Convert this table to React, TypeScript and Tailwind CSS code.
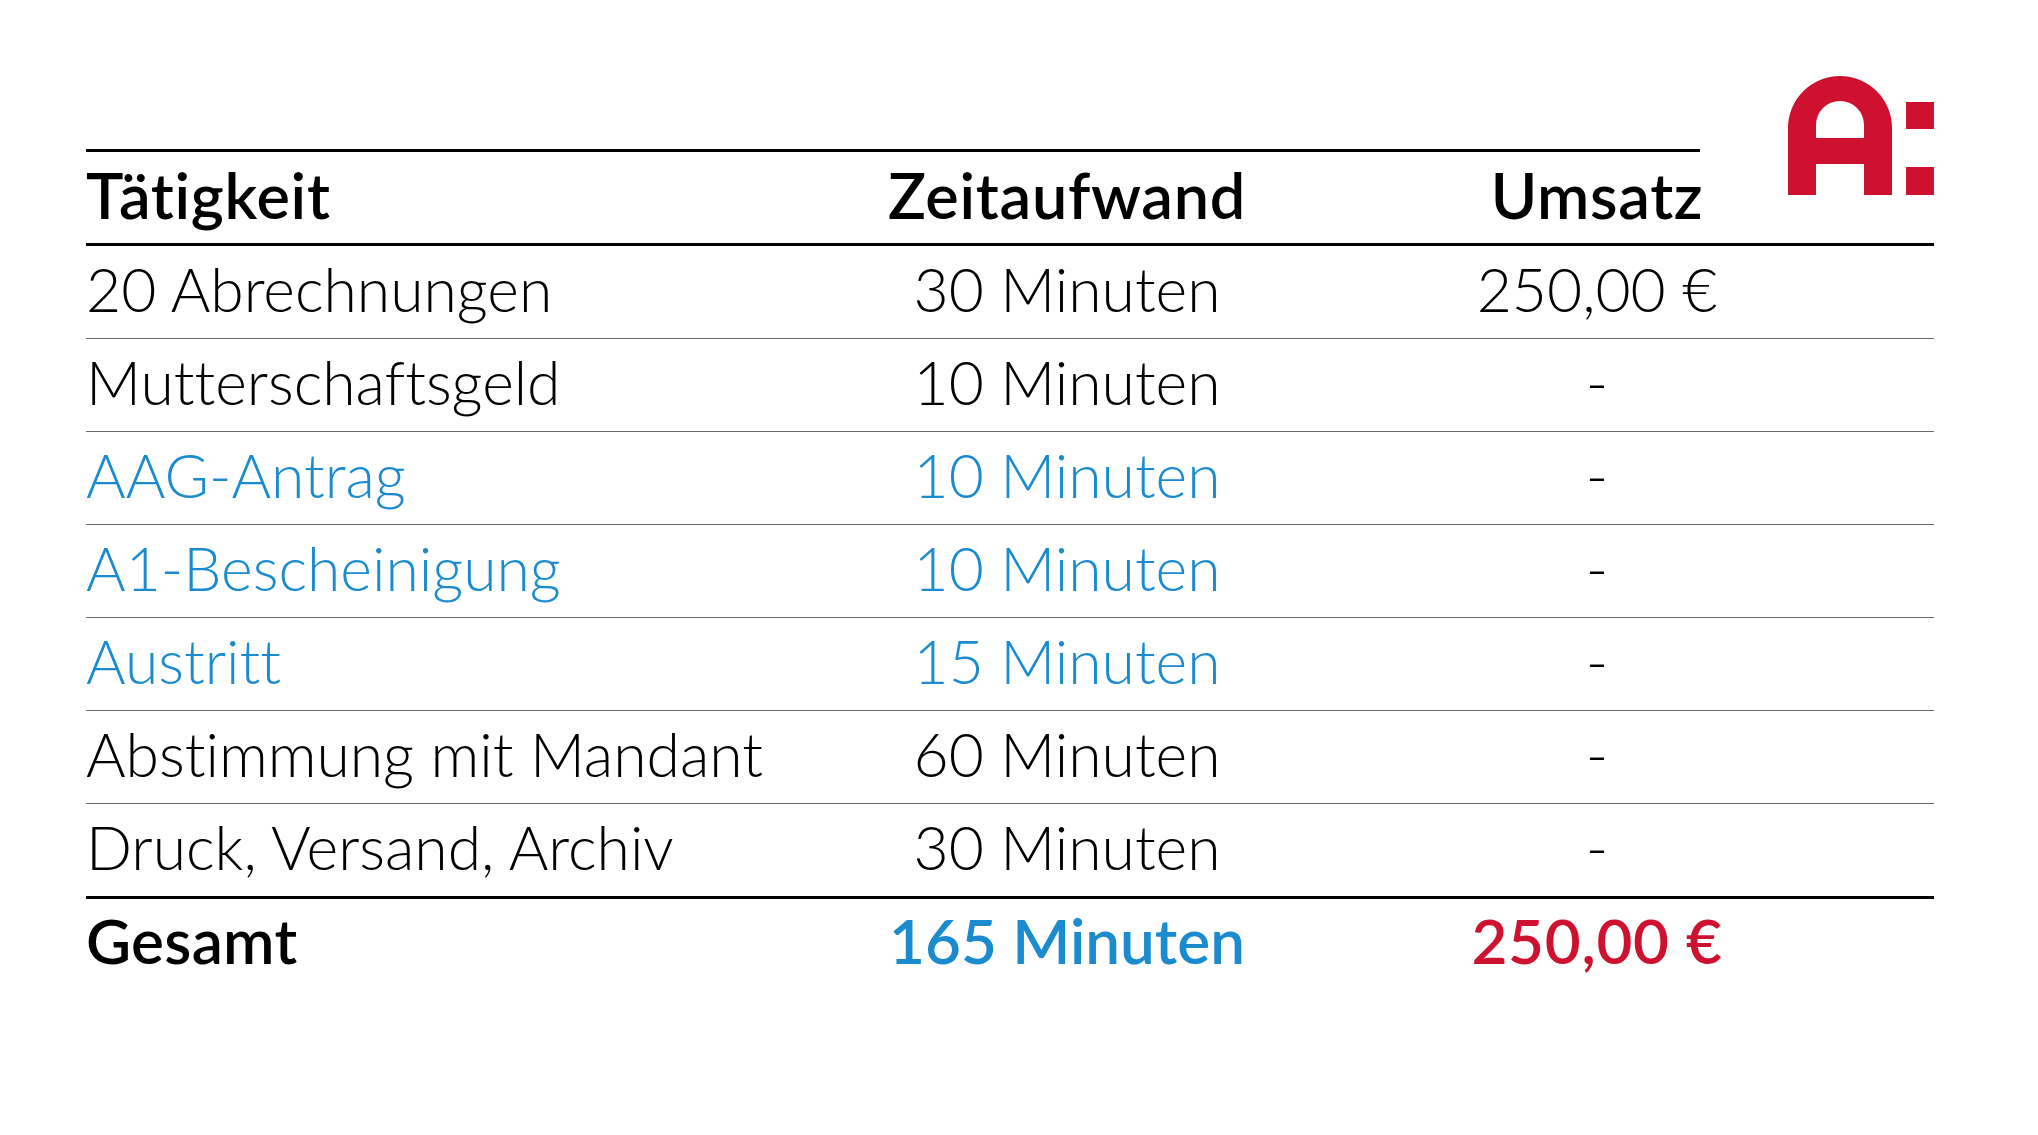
type Row = { task: string; time: string; amount: string; blue?: boolean };

const rows: Row[] = [
  { task: '20 Abrechnungen', time: '30 Minuten', amount: '250,00 €' },
  { task: 'Mutterschaftsgeld', time: '10 Minuten', amount: '-' },
  { task: 'AAG-Antrag', time: '10 Minuten', amount: '-', blue: true },
  { task: 'A1-Bescheinigung', time: '10 Minuten', amount: '-', blue: true },
  { task: 'Austritt', time: '15 Minuten', amount: '-', blue: true },
  { task: 'Abstimmung mit Mandant', time: '60 Minuten', amount: '-' },
  { task: 'Druck, Versand, Archiv', time: '30 Minuten', amount: '-' },
];

function Logo() {
  return (
    <svg width="146" height="119" viewBox="0 0 146 119" className="shrink-0">
      <path
        fill="#cf1130"
        fillRule="evenodd"
        d="M0 119V52A52 52 0 0 1 104 52V119H76V88H28V119ZM28 62V49A24 24 0 0 1 76 49V62Z"
      />
      <rect x="118" y="26" width="28" height="27" fill="#cf1130" />
      <rect x="118" y="91" width="28" height="28" fill="#cf1130" />
    </svg>
  );
}

export default function App() {
  return (
    <div className="min-h-[1135px] w-full bg-white pt-[149px] pl-[86px] font-['Lato',sans-serif] text-black [font-variant-ligatures:none]">
      <div className="h-[3px] w-[1614px] bg-black" />
      <div className="relative w-[1848px]">
        <div className="absolute right-0 top-[-76px]">
          <Logo />
        </div>
        <div className="grid h-[91px] grid-cols-[781px_400px_660px] items-center pb-[6px] text-[63px] font-semibold leading-none tracking-[0.7px]">
          <div>Tätigkeit</div>
          <div className="text-center">Zeitaufwand</div>
          <div className="text-center">Umsatz</div>
        </div>
        <div className="h-[3px] bg-black" />
        {rows.map((r, i) => (
          <div
            key={r.task}
            className={`grid grid-cols-[781px_400px_660px] items-center pb-[6px] text-[60.6px] font-light leading-none ${
              i === rows.length - 1 ? 'h-[95px] border-b-[3px] border-black' : 'h-[93px] border-b border-[#6b6b6b]'
            }`}
          >
            <div className={r.blue ? 'text-[#1a8bcf]' : ''}>{r.task}</div>
            <div className={`text-center ${r.blue ? 'text-[#1a8bcf]' : ''}`}>{r.time}</div>
            <div className="text-center">{r.amount}</div>
          </div>
        ))}
        <div className="grid h-[92px] grid-cols-[781px_400px_660px] items-center pb-[10px] text-[62px] font-semibold leading-none">
          <div className="tracking-[0.3px]">Gesamt</div>
          <div className="text-center text-[#1a8bcf]">165 Minuten</div>
          <div className="text-center text-[#cf1130] tracking-[0.7px]">250,00 €</div>
        </div>
      </div>
    </div>
  );
}
